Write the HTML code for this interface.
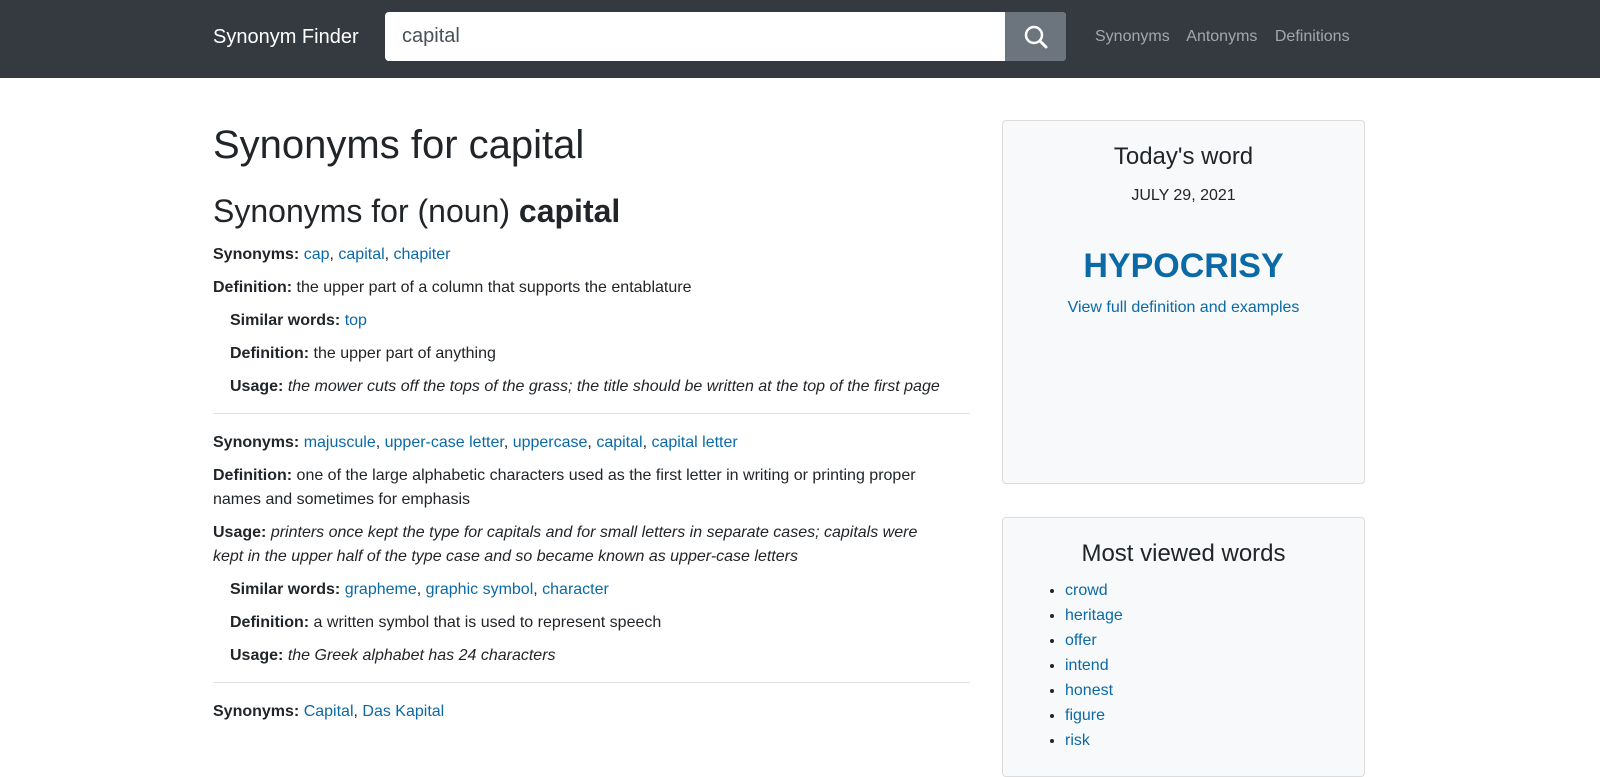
<!DOCTYPE html>
<html><head><meta charset="utf-8"><style>
*{box-sizing:border-box}
body{margin:0;font-family:"Liberation Sans",Arial,sans-serif;color:#212529;background:#fff;font-size:16px;line-height:24px;overflow:hidden;height:753px}
a{color:#0b6aa6;text-decoration:none}
.nav{height:78px;background:#343a40;position:relative}
.brand{position:absolute;left:213px;top:25px;color:#fff;font-size:20px;line-height:24px}
.search{position:absolute;left:385px;top:12px;width:681px;height:49px;background:#fff;border-radius:4px;overflow:hidden}
.search span{position:absolute;left:17px;top:12px;font-size:20px;color:#495057}
.btn{position:absolute;right:0;top:0;width:61px;height:49px;background:#6c757d}
.links{position:absolute;left:1095px;top:25px;font-size:16px;color:rgba(255,255,255,.55)}
.links span{margin-right:13px}
.main{position:absolute;left:213px;top:112px;width:757px}
h1{font-size:40px;font-weight:400;margin:0;line-height:48px;position:absolute;top:9px}
h2{font-size:32px;font-weight:400;margin:0;line-height:38px;position:absolute;top:80px}
.body{position:absolute;top:131px;width:757px}
p{margin:0 0 9px;max-width:736px}
.ind{padding-left:17px}
hr{border:0;border-top:1px solid #dee2e6;margin:14px 0 17px}
.card{position:absolute;left:1002px;width:363px;background:#f8f9fa;border:1px solid #dcdcdc;border-radius:4px;text-align:center}
</style></head><body>
<div class="nav">
<div class="brand">Synonym Finder</div>
<div class="search"><span>capital</span><div class="btn"><svg width="61" height="49" viewBox="0 0 61 49"><circle cx="29" cy="23" r="8" fill="none" stroke="#fff" stroke-width="2.5"/><line x1="35" y1="29" x2="41" y2="35" stroke="#fff" stroke-width="3" stroke-linecap="round"/></svg></div></div>
<div class="links"><span>Synonyms</span> <span>Antonyms</span> <span>Definitions</span></div>
</div>
<div class="main">
<h1>Synonyms for capital</h1>
<h2>Synonyms for (noun) <b>capital</b></h2>
<div class="body">
<p><b>Synonyms:</b> <a>cap</a>, <a>capital</a>, <a>chapiter</a></p>
<p><b>Definition:</b> the upper part of a column that supports the entablature</p>
<p class="ind"><b>Similar words:</b> <a>top</a></p>
<p class="ind"><b>Definition:</b> the upper part of anything</p>
<p class="ind" style="max-width:760px"><b>Usage:</b> <i>the mower cuts off the tops of the grass; the title should be written at the top of the first page</i></p>
<hr>
<p><b>Synonyms:</b> <a>majuscule</a>, <a>upper-case letter</a>, <a>uppercase</a>, <a>capital</a>, <a>capital letter</a></p>
<p><b>Definition:</b> one of the large alphabetic characters used as the first letter in writing or printing proper<br>names and sometimes for emphasis</p>
<p><b>Usage:</b> <i>printers once kept the type for capitals and for small letters in separate cases; capitals were<br>kept in the upper half of the type case and so became known as upper-case letters</i></p>
<p class="ind"><b>Similar words:</b> <a>grapheme</a>, <a>graphic symbol</a>, <a>character</a></p>
<p class="ind"><b>Definition:</b> a written symbol that is used to represent speech</p>
<p class="ind"><b>Usage:</b> <i>the Greek alphabet has 24 characters</i></p>
<hr>
<p><b>Synonyms:</b> <a>Capital</a>, <a>Das Kapital</a></p>
</div></div>
<div class="card" style="top:120px;height:364px">
<div style="font-size:24px;line-height:28px;margin-top:22px">Today's word</div>
<div style="margin-top:13px">JULY 29, 2021</div>
<div style="font-size:34px;font-weight:bold;color:#0b6aa6;margin-top:38px;line-height:40px">HYPOCRISY</div>
<div style="margin-top:10px"><a>View full definition and examples</a></div>
</div>
<div class="card" style="top:517px;height:260px">
<div style="font-size:24px;line-height:28px;margin-top:22px">Most viewed words</div>
<ul style="text-align:left;margin:10px 0 0;padding-left:62px;line-height:25px">
<li><a>crowd</a></li><li><a>heritage</a></li><li><a>offer</a></li><li><a>intend</a></li><li><a>honest</a></li><li><a>figure</a></li><li><a>risk</a></li>
</ul></div>
</body></html>
